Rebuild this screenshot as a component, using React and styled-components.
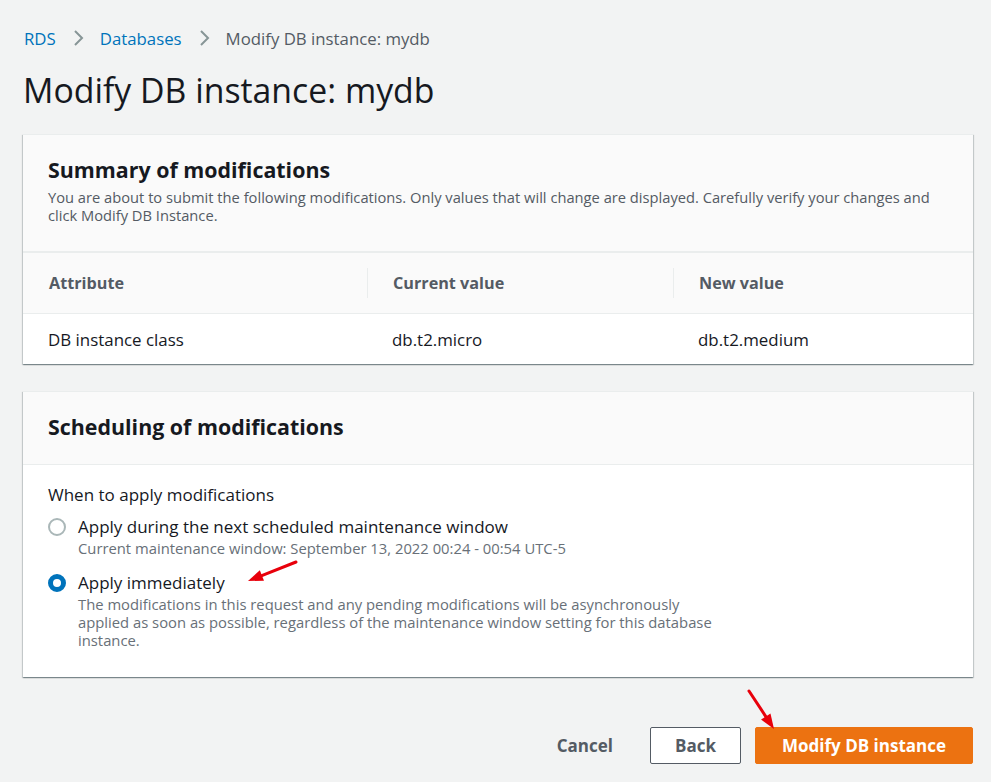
import React from 'react';
import styled, { createGlobalStyle } from 'styled-components';

const GlobalStyle = createGlobalStyle`
  html, body {
    margin: 0;
    padding: 0;
    background: #f2f3f3;
  }
  body {
    font-family: "Open Sans", "Noto Sans", Arial, sans-serif;
    color: #16191f;
  }
  * { box-sizing: border-box; }
`;

const Page = styled.div`
  position: relative;
  width: 991px;
  height: 782px;
  padding: 26px 18px 0 23px;
  overflow: hidden;
`;

const Crumbs = styled.nav`
  display: flex;
  align-items: center;
  gap: 16px;
  height: 24px;
  padding-left: 1px;
  font-size: 16.8px;
`;

const Crumb = styled.span`
  color: ${p => (p.current ? '#545b64' : '#0073bb')};
`;

const Chevron = () => (
  <svg width="12" height="18" viewBox="0 0 12 18">
    <path d="M3 2 L10 9 L3 16" fill="none" stroke="#879596" strokeWidth="2" />
  </svg>
);

const Title = styled.h1`
  margin: 18px 0 22px;
  font-size: 33.8px;
  font-weight: 400;
  line-height: 44px;
  color: #16191f;
`;

const Card = styled.section`
  background: #fff;
  border-top: 1px solid #eaeded;
  box-shadow: 0 1px 1px 0 rgba(0, 28, 36, 0.3), 1px 1px 1px 0 rgba(0, 28, 36, 0.15),
    -1px 1px 1px 0 rgba(0, 28, 36, 0.15);
  margin-bottom: 27px;
`;

const CardHeader = styled.header`
  background: #fafafa;
  padding: ${p => p.pad || '20px 25px 27px'};
  border-bottom: 1px solid #eaeded;
`;

const CardTitle = styled.h2`
  margin: 0;
  font-size: 21.4px;
  font-weight: 700;
  line-height: 30px;
  color: #16191f;
`;

const CardDesc = styled.p`
  margin: 3px 0 0;
  font-size: 14.7px;
  line-height: 18px;
  color: #545b64;
`;

const Table = styled.div`
  display: grid;
  grid-template-columns: 344px 306px 1fr;
`;

const HeadCell = styled.div`
  height: 62px;
  display: flex;
  align-items: center;
  padding-left: 26px;
  background: #fafafa;
  border-top: 1px solid #eaeded;
  border-bottom: 1px solid #eaeded;
  font-size: 16.2px;
  font-weight: 700;
  color: #545b64;
  position: relative;

  &::before {
    content: '';
    display: ${p => (p.first ? 'none' : 'block')};
    position: absolute;
    left: 0;
    top: 15px;
    bottom: 15px;
    width: 1px;
    background: #eaeded;
  }
`;

const BodyCell = styled.div`
  height: 50px;
  display: flex;
  align-items: center;
  padding-left: 25px;
  font-size: 16.9px;
  color: #16191f;
`;

const CardBody = styled.div`
  padding: 19px 25px 28px;
`;

const FieldLabel = styled.div`
  font-size: 17px;
  line-height: 22px;
  color: #16191f;
  margin-bottom: 9px;
`;

const Option = styled.label`
  display: flex;
  gap: 12px;
  margin-bottom: ${p => (p.last ? '0' : '14px')};
`;

const Radio = styled.span`
  flex: none;
  width: 18px;
  height: 18px;
  margin-top: 3px;
  border-radius: 50%;
  border: ${p => (p.checked ? '5px solid #0073bb' : '2px solid #aab7b8')};
  background: #fff;
`;

const OptionText = styled.div`
  display: flex;
  flex-direction: column;
`;

const OptionTitle = styled.span`
  font-size: 17px;
  line-height: 24px;
  color: #16191f;
`;

const OptionHint = styled.span`
  font-size: 14.8px;
  line-height: 18px;
  color: #687078;
  max-width: 635px;
`;

const Actions = styled.div`
  display: flex;
  justify-content: flex-end;
  align-items: center;
  gap: 14px;
  margin-top: 50px;
`;

const Button = styled.button`
  font-family: inherit;
  font-size: 17px;
  font-weight: 700;
  height: 37px;
  padding: 0 ${p => (p.variant === 'primary' ? '26px' : p.variant === 'link' ? '22px' : '24px')};
  border-radius: 2px;
  cursor: pointer;
  color: ${p => (p.variant === 'primary' ? '#fff' : '#545b64')};
  background: ${p => (p.variant === 'primary' ? '#ec7211' : p.variant === 'link' ? 'transparent' : '#fff')};
  border: 1px solid ${p => (p.variant === 'primary' ? '#ec7211' : p.variant === 'link' ? 'transparent' : '#545b64')};
`;

// red annotation arrows drawn over the screenshot
const Arrow = styled.svg`
  position: absolute;
  left: 0;
  top: 0;
  overflow: visible;
`;

const RedArrow = ({ x1, y1, x2, y2 }) => {
  const ang = Math.atan2(y2 - y1, x2 - x1);
  const len = 16;
  const spread = 0.36;
  const p1 = [x2 - len * Math.cos(ang - spread), y2 - len * Math.sin(ang - spread)];
  const p2 = [x2 - len * Math.cos(ang + spread), y2 - len * Math.sin(ang + spread)];
  const bx = x2 - len * 0.8 * Math.cos(ang);
  const by = y2 - len * 0.8 * Math.sin(ang);
  return (
    <Arrow width="1" height="1">
      <line x1={x1} y1={y1} x2={bx} y2={by} stroke="#e8000b" strokeWidth="3" strokeLinecap="round" />
      <polygon points={`${x2},${y2} ${p1[0]},${p1[1]} ${p2[0]},${p2[1]}`} fill="#e8000b" />
    </Arrow>
  );
};

export default function App() {
  return (
    <Page>
      <GlobalStyle />
      <Crumbs>
        <Crumb>RDS</Crumb>
        <Chevron />
        <Crumb>Databases</Crumb>
        <Chevron />
        <Crumb current>Modify DB instance: mydb</Crumb>
      </Crumbs>
      <Title>Modify DB instance: mydb</Title>

      <Card>
        <CardHeader>
          <CardTitle>Summary of modifications</CardTitle>
          <CardDesc>
            You are about to submit the following modifications. Only values that will change are
            displayed. Carefully verify your changes and click Modify DB Instance.
          </CardDesc>
        </CardHeader>
        <Table>
          <HeadCell first>Attribute</HeadCell>
          <HeadCell>Current value</HeadCell>
          <HeadCell>New value</HeadCell>
          <BodyCell>DB instance class</BodyCell>
          <BodyCell>db.t2.micro</BodyCell>
          <BodyCell>db.t2.medium</BodyCell>
        </Table>
      </Card>

      <Card>
        <CardHeader pad="20px 25px 22px">
          <CardTitle>Scheduling of modifications</CardTitle>
        </CardHeader>
        <CardBody>
          <FieldLabel>When to apply modifications</FieldLabel>
          <Option>
            <Radio />
            <OptionText>
              <OptionTitle>Apply during the next scheduled maintenance window</OptionTitle>
              <OptionHint>Current maintenance window: September 13, 2022 00:24 - 00:54 UTC-5</OptionHint>
            </OptionText>
          </Option>
          <Option last>
            <Radio checked />
            <OptionText>
              <OptionTitle>Apply immediately</OptionTitle>
              <OptionHint>
                The modifications in this request and any pending modifications will be asynchronously
                applied as soon as possible, regardless of the maintenance window setting for this database
                instance.
              </OptionHint>
            </OptionText>
          </Option>
        </CardBody>
      </Card>

      <Actions>
        <Button variant="link">Cancel</Button>
        <Button>Back</Button>
        <Button variant="primary">Modify DB instance</Button>
      </Actions>

      <RedArrow x1={296} y1={562} x2={248} y2={581} />
      <RedArrow x1={749} y1={691} x2={774} y2={729} />
    </Page>
  );
}
